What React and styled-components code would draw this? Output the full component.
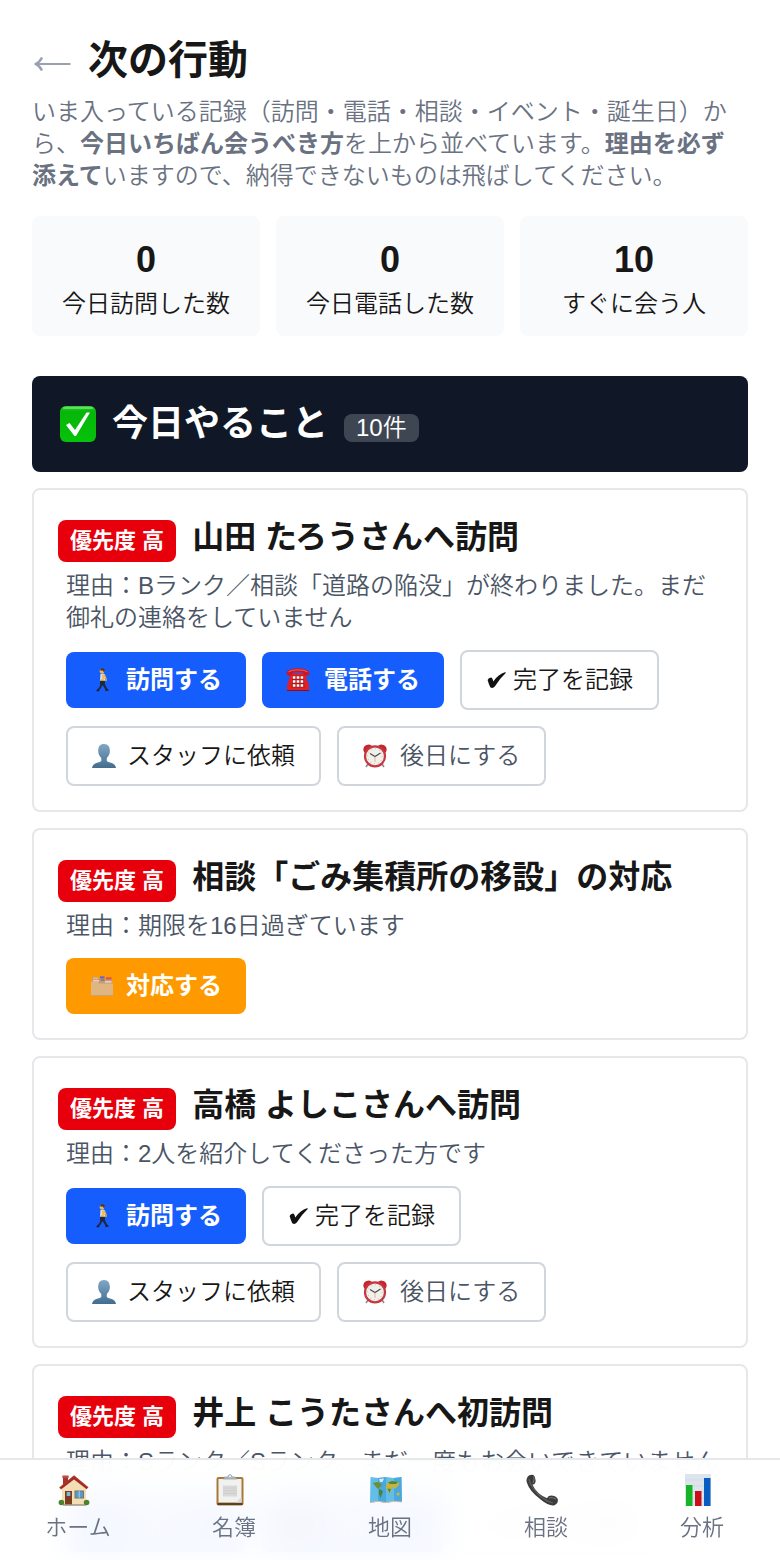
import React from "react";
import styled, { createGlobalStyle, css } from "styled-components";

const GlobalStyle = createGlobalStyle`
  *, *::before, *::after { box-sizing: border-box; }
  body {
    margin: 0;
    background: #ffffff;
    color: #171717;
    font-family: "Liberation Sans", "Noto Sans CJK JP", sans-serif;
    font-size: 24px;
    font-weight: 350;
    line-height: 32px;
  }
  h1, h2, h3, p, ul { margin: 0; padding: 0; }
  ul { list-style: none; }
`;

const Shell = styled.div`
  height: 100vh;
  overflow: hidden;
`;

const Page = styled.main`
  height: 100%;
  overflow-y: auto;
  scrollbar-width: none;
  padding: 32px 32px 120px;
`;

const Header = styled.header`
  display: flex;
  align-items: center;
  gap: 16px;
  margin-bottom: 8px;
`;

const BackLink = styled.a`
  display: flex;
  width: 40px;
  padding-top: 8px;
  color: #99a1af;
`;

const Title = styled.h1`
  font-size: 40px;
  font-weight: 600;
  line-height: 56px;
`;

const Lead = styled.p`
  color: #6a7282;
  strong { font-weight: 700; }
`;

const Stats = styled.section`
  display: grid;
  grid-template-columns: repeat(3, 1fr);
  gap: 16px;
  margin: 24px 0 40px;
`;

const StatCard = styled.div`
  padding: 16px;
  border-radius: 8px;
  background: #f9fafb;
  text-align: center;
`;

const StatValue = styled.div`
  font-size: 36px;
  font-weight: 700;
  line-height: 56px;
`;

const Banner = styled.div`
  display: flex;
  align-items: center;
  gap: 16px;
  padding: 24px 28px;
  border-radius: 8px;
  background: #101828;
  color: #ffffff;
`;

const BannerHeading = styled.div`
  display: flex;
  align-items: baseline;
  gap: 16px;
`;

const BannerTitle = styled.h2`
  font-size: 36px;
  font-weight: 600;
  line-height: 48px;
`;

const Count = styled.span`
  padding: 0 12px;
  border-radius: 8px;
  background: rgba(255, 255, 255, 0.2);
  line-height: 28px;
`;

const TaskList = styled.ul`
  display: flex;
  flex-direction: column;
  gap: 16px;
  margin-top: 16px;
`;

const Card = styled.li`
  padding: 24px;
  border: 2px solid #e5e7eb;
  border-radius: 8px;
`;

const CardHead = styled.div`
  display: flex;
  align-items: flex-start;
  gap: 16px;
  margin-bottom: 8px;
`;

const Priority = styled.span`
  flex: none;
  margin-top: 6px;
  padding: 0 12px;
  border-radius: 8px;
  background: #e7000b;
  color: #ffffff;
  font-size: 22px;
  font-weight: 600;
  line-height: 42px;
`;

const CardTitle = styled.h3`
  font-size: 32px;
  font-weight: 600;
  line-height: 46px;
`;

const Reason = styled.p`
  margin-right: -2px;
  padding-left: 8px;
  color: #4a5565;
`;

const Actions = styled.div`
  display: flex;
  flex-wrap: wrap;
  align-items: center;
  gap: 16px;
  margin-top: 16px;
  padding-left: 8px;
`;

const tones = {
  blue: css`background: #155dfc; color: #ffffff; font-weight: 600;`,
  amber: css`background: #fe9a00; color: #ffffff; font-weight: 600;`,
  plain: css`border: 2px solid #d1d5dc; background: #ffffff; color: #171717;`,
  muted: css`border: 2px solid #d1d5dc; background: #ffffff; color: #4a5565;`,
};

const ActionButton = styled.button`
  display: inline-flex;
  align-items: center;
  padding: 12px 24px;
  border: 0;
  border-radius: 8px;
  font: inherit;
  line-height: 32px;
  cursor: pointer;
  ${({ $tone }) => tones[$tone]}
`;

const IconSlot = styled.span`
  display: flex;
  width: ${({ $width }) => $width}px;
`;

const TabBar = styled.nav`
  position: fixed;
  right: 0;
  bottom: 0;
  left: 0;
  display: grid;
  grid-template-columns: repeat(5, 1fr);
  padding: 14px 0 16px;
  border-top: 2px solid #e5e7eb;
  background: rgba(255, 255, 255, 0.95);
  backdrop-filter: blur(16px);
`;

const Tab = styled.a`
  display: flex;
  flex-direction: column;
  align-items: center;
  gap: 6px;
  color: #6a7282;
  font-size: 22px;
  text-decoration: none;
  svg { margin-right: 8px; }
`;

const Svg = ({ size = 24, box = 24, children }) => (
  <svg width={size} height={size} viewBox={`0 0 ${box} ${box}`} aria-hidden="true" fill="none">
    {children}
  </svg>
);

const BackArrow = () => (
  <svg width="40" height="20" viewBox="0 0 40 20" fill="none" aria-hidden="true">
    <path d="M4 10H38.5" stroke="currentColor" strokeWidth="2" />
    <path d="M10 3.5Q8 8 3.5 10Q8 12 10 16.5" stroke="currentColor" strokeWidth="2.4" strokeLinejoin="round" />
  </svg>
);

const CheckBoxIcon = () => (
  <Svg size={36} box={36}>
    <defs>
      <linearGradient id="green" x1="0" y1="0" x2="0" y2="1">
        <stop offset="0" stopColor="#35d035" />
        <stop offset="0.15" stopColor="#06b60a" />
        <stop offset="1" stopColor="#06c20a" />
      </linearGradient>
    </defs>
    <rect width="36" height="36" rx="6" fill="url(#green)" />
    <rect x="3" y="1" width="30" height="2" rx="1" fill="#7ce47c" opacity="0.7" />
    <path d="M6 19L9.5 17L15 24L26.5 6.5H30L16 30H14.5Z" fill="#fff" />
  </Svg>
);

const WalkIcon = () => (
  <Svg>
    <circle cx="12" cy="3.2" r="2.4" fill="#e8b45a" />
    <path d="M10.2 2.6Q10 0.2 12.6 0.2Q15 0.6 14.8 3.4L13.6 4L13 2.4Z" fill="#4a3320" />
    <path d="M10.4 6Q13 4.8 15 6.4L15.4 13.4H10Z" fill="#dbe0e2" />
    <path d="M12.6 6.6L13.6 10.4L11.4 12.8" stroke="#f0bd52" strokeWidth="2" />
    <path d="M14.4 7L16 10.5L16 13" stroke="#e8a94f" strokeWidth="1.4" />
    <path d="M10 12.8H15.2L14.8 16L17.4 21L15.8 22L12.4 17L11 20L9 22.2L7.8 21.2L10 18Z" fill="#20283c" />
    <path d="M6.5 22.2L8 20.7L9.7 22L8.8 23.2H6.7ZM15 21.7L17.2 20.8L18.6 21.8V22.8H15Z" fill="#221f26" />
  </Svg>
);

const PhoneIcon = () => (
  <Svg>
    <path d="M5 5H19L23 17V22.5H1V17Z" fill="#dc2128" />
    <path d="M0.5 6.5Q0 2 6 1Q12 -0.5 18 1Q24 2 23.5 6.5Q21 8.5 18 7L17 4.5Q12 3 7 4.5L6 7Q3 8.5 0.5 6.5Z" fill="#cf1620" />
    <path d="M2.5 3.8Q5 2 12 1.8Q19 2 21.5 3.8" stroke="#f25a5f" />
    <path d="M6.5 7.5H17.5L18.5 19.5H5.5Z" fill="#b3141c" />
    <path d="M6.8 9.5H17.2M6.8 13.5H17.2M6.8 17.5H17.2" stroke="#fff" strokeWidth="2.6" strokeDasharray="2.6 1.3" />
    <path d="M1 22.5H23" stroke="#8e0d14" />
  </Svg>
);

const HeavyCheckIcon = () => (
  <Svg>
    <path d="M1.6 12Q2.6 9.7 5 9.5Q6.5 9.5 7.2 13.4Q12.5 6 19 4.2Q20.5 4 19.5 5.3Q13.5 10.8 8.8 18.6Q6.6 21 4.3 19.3Q3 17 1.6 12Z" fill="#111" />
  </Svg>
);

const PersonIcon = () => (
  <Svg>
    <defs>
      <linearGradient id="bust" x1="0" y1="0" x2="0" y2="1">
        <stop offset="0" stopColor="#80a7c5" />
        <stop offset="1" stopColor="#426d90" />
      </linearGradient>
    </defs>
    <path d="M12 0C7.8 0 6 3 6.2 7.5C6.3 10.5 7.8 12.5 9.3 14V17Q8.5 18 5 18.7Q0.5 20 0 24H24Q23.5 20 19 18.7Q15.5 18 14.8 17V14C16.3 12.5 17.8 10.5 17.9 7.5C18 3 16.2 0 12 0Z" fill="url(#bust)" />
  </Svg>
);

const ClockIcon = () => (
  <Svg>
    <path d="M5 20L3 23M19 20L21 23" stroke="#8a8d91" strokeWidth="1.6" />
    <path d="M1 8Q-1 3 3.5 1Q7 -0.5 9 2L2 9Z" fill="#c72631" />
    <path d="M23 8Q25 3 20.5 1Q17 -0.5 15 2L22 9Z" fill="#c72631" />
    <circle cx="12" cy="12.3" r="10" fill="#f2f0ea" stroke="#c4383f" strokeWidth="2.2" />
    <circle cx="12" cy="12.3" r="7.4" stroke="#aaa" strokeWidth="1" strokeDasharray="0.8 3.07" />
    <path d="M7 9.5L12 12.5L17.5 9" stroke="#4a4a4a" strokeWidth="1.1" />
    <path d="M12 12.5V18" stroke="#d6a36b" strokeWidth="0.7" />
  </Svg>
);

const DividersIcon = () => (
  <Svg>
    <path d="M2 3H8L9 5H15L16 4H22V10H2Z" fill="#c89b75" />
    <path d="M3 4.4H8" stroke="#e5b5a0" strokeWidth="1.6" />
    <path d="M10 3.4H14.5" stroke="#4c68d5" strokeWidth="2" />
    <path d="M16 4.4H21.5" stroke="#ed4553" strokeWidth="2" />
    <path d="M3 6.8H9M15 7.8H21.5" stroke="#f2dfcc" strokeWidth="1.3" />
    <path d="M10.5 6H14.5" stroke="#5266c4" strokeWidth="1.2" />
    <path d="M1 8H8L9 9.5H23V22H1Z" fill="#dfb582" />
    <path d="M1 21.5H23" stroke="#cda06d" />
  </Svg>
);

const HomeIcon = () => (
  <Svg size={32} box={32}>
    <path d="M5 2H10V11H5Z" fill="#a4332b" />
    <path d="M4.4 1.5H10.6V4H4.4Z" fill="#bd4b3e" />
    <path d="M4 14L16 4L28 14V31H4Z" fill="#f3dfb5" />
    <path d="M16 1.2L30.5 13.3L28.6 15.3L16 5.4L3 15.6L1.2 13.5Z" fill="#b2342c" />
    <path d="M3 14L16 3.8L28.8 14" stroke="#7d211d" strokeWidth="0.7" />
    <rect x="7" y="17" width="7" height="14" fill="#7c3c22" />
    <rect x="8.7" y="18" width="3.6" height="4" fill="#7db8d8" />
    <rect x="17" y="17" width="8.5" height="7" fill="#4f9fd6" stroke="#836e57" />
    <path d="M21.2 17V24" stroke="#c1dded" strokeWidth="0.8" />
    <path d="M5 31H28" stroke="#a39b88" strokeWidth="1.6" />
    <circle cx="3.4" cy="28.5" r="2.8" fill="#4c822b" />
    <circle cx="28.6" cy="28.5" r="2.8" fill="#4c822b" />
  </Svg>
);

const ClipboardIcon = () => (
  <Svg size={32} box={32}>
    <rect x="2.5" y="3" width="27" height="28.5" rx="2" fill="#a97839" />
    <path d="M3.5 30H28.5" stroke="#594125" strokeWidth="2" />
    <rect x="4.5" y="5" width="23" height="23.5" fill="#f1f1f0" />
    <rect x="9" y="11.5" width="14" height="11" fill="#d9d9d9" />
    <path d="M9 14H23M9 16.7H23M9 19.4H23" stroke="#cbcbcb" strokeWidth="0.8" />
    <path d="M22 28.5L27.5 23V28.5Z" fill="#d9d9d7" />
    <path d="M9 5L10.5 3H13.5Q16 -2 18.5 3H21.5L23 5Z" fill="#b7bdc1" stroke="#82898e" strokeWidth="0.6" />
    <circle cx="16" cy="2.2" r="0.9" fill="#fff" />
  </Svg>
);

const MapIcon = () => (
  <Svg size={32} box={32}>
    <path d="M0.5 3L8 4L16 3L24 4L31.5 3L32 28L24 27.5L16 29L8 27.5L0 29Z" fill="#62bde8" />
    <path d="M8 4L16 3V29L8 27.5ZM24 4L31.5 3L32 28L24 27.5Z" fill="#2f95d0" opacity="0.5" />
    <path d="M0 28.6L8 27.2L16 28.6L24 27.2L32 28" stroke="#d8bda0" strokeWidth="1" />
    <path d="M3 9L7 8L10 9L12 11L10 13L8 15L6 13Z" fill="#6f8f34" />
    <path d="M9 15L13 17L12 20L10.5 24L9 20Z" fill="#4f8033" />
    <path d="M9 5L14 4.6L12.5 8L10 8Z" fill="#d6ecf4" />
    <path d="M17 10L20 7L28 8L29.5 10L27 13L25 15L23 13L21.5 14L21 18L19.5 20L18 16L15.5 14L16 12Z" fill="#c9b23b" />
    <path d="M18 8.5L22 7L28 8L26 10L20 10ZM17.5 14.5L21 15L19.5 19Z" fill="#4a8a33" />
    <path d="M26.5 19L29.5 18.6L29.5 21.5L27 21.5Z" fill="#d2b04a" />
  </Svg>
);

const HandsetIcon = () => (
  <Svg size={32} box={32}>
    <path d="M1 4Q3 0 7.5 1Q10 3 9.5 8Q9 10.5 6.5 10.8Q8 15 13 19.5Q17 22.8 21 24.3Q22 21.7 25 21.5Q29.5 21.5 31.5 24.5Q33 29 28.5 31.3Q23 32.5 14 25Q3.5 17 1 9Q0 6.5 1 4Z" fill="#3c3c3c" />
    <path d="M3 5Q4 12 12 20Q20 27.5 27 29" stroke="#606060" strokeWidth="1.2" />
    <path d="M7.8 2.5Q8.8 6 7 9M23 24Q26 22.7 30 25" stroke="#808080" strokeWidth="0.9" />
  </Svg>
);

const ChartIcon = () => (
  <Svg size={32} box={32}>
    <rect x="3" y="0" width="26" height="32" fill="#dce4ed" />
    <path d="M3 6H29M3 12H29M3 18H29M3 24H29" stroke="#ccd6e0" strokeWidth="0.6" />
    <rect x="4" y="11" width="6.5" height="21" fill="#15b526" />
    <rect x="13" y="17" width="6.5" height="15" fill="#c8101b" />
    <rect x="22" y="4" width="6.5" height="28" fill="#075ec0" />
  </Svg>
);

const ACTIONS = {
  visit: { label: "訪問する", tone: "blue", Icon: WalkIcon, slot: 36 },
  call: { label: "電話する", tone: "blue", Icon: PhoneIcon, slot: 38 },
  done: { label: "完了を記録", tone: "plain", Icon: HeavyCheckIcon, slot: 27 },
  staff: { label: "スタッフに依頼", tone: "plain", Icon: PersonIcon, slot: 35 },
  later: { label: "後日にする", tone: "muted", Icon: ClockIcon, slot: 37 },
  handle: { label: "対応する", tone: "amber", Icon: DividersIcon, slot: 36 },
};

const STATS = [
  { value: 0, label: "今日訪問した数" },
  { value: 0, label: "今日電話した数" },
  { value: 10, label: "すぐに会う人" },
];

const TASKS = [
  {
    title: "山田 たろうさんへ訪問",
    reason: "Bランク／相談「道路の陥没」が終わりました。まだ御礼の連絡をしていません",
    actions: ["visit", "call", "done", "staff", "later"],
  },
  {
    title: "相談「ごみ集積所の移設」の対応",
    reason: "期限を16日過ぎています",
    actions: ["handle"],
  },
  {
    title: "高橋 よしこさんへ訪問",
    reason: "2人を紹介してくださった方です",
    actions: ["visit", "done", "staff", "later"],
  },
  {
    title: "井上 こうたさんへ初訪問",
    reason: "Sランク／Sランク。まだ一度もお会いできていません",
    actions: ["visit", "call", "done"],
  },
];

const TABS = [
  { label: "ホーム", Icon: HomeIcon },
  { label: "名簿", Icon: ClipboardIcon },
  { label: "地図", Icon: MapIcon },
  { label: "相談", Icon: HandsetIcon },
  { label: "分析", Icon: ChartIcon },
];

export default function App() {
  return (
    <Shell lang="ja">
      <GlobalStyle />
      <Page>
        <Header>
          <BackLink href="#" aria-label="戻る"><BackArrow /></BackLink>
          <Title>次の行動</Title>
        </Header>
        <Lead>
          いま入っている記録（訪問・電話・相談・イベント・誕生日）から、<strong>今日いちばん会うべき方</strong>を上から並べています。<strong>理由を必ず添えて</strong>いますので、納得できないものは飛ばしてください。
        </Lead>
        <Stats>
          {STATS.map((s) => (
            <StatCard key={s.label}>
              <StatValue>{s.value}</StatValue>
              <div>{s.label}</div>
            </StatCard>
          ))}
        </Stats>
        <Banner>
          <CheckBoxIcon />
          <BannerHeading>
            <BannerTitle>今日やること</BannerTitle>
            <Count>10件</Count>
          </BannerHeading>
        </Banner>
        <TaskList>
          {TASKS.map((task) => (
            <Card key={task.title}>
              <CardHead>
                <Priority>優先度 高</Priority>
                <CardTitle>{task.title}</CardTitle>
              </CardHead>
              <Reason>理由：{task.reason}</Reason>
              <Actions>
                {task.actions.map((key) => {
                  const { label, tone, Icon, slot } = ACTIONS[key];
                  return (
                    <ActionButton key={key} type="button" $tone={tone}>
                      <IconSlot $width={slot}><Icon /></IconSlot>
                      {label}
                    </ActionButton>
                  );
                })}
              </Actions>
            </Card>
          ))}
        </TaskList>
      </Page>
      <TabBar>
        {TABS.map(({ label, Icon }) => (
          <Tab key={label} href="#"><Icon />{label}</Tab>
        ))}
      </TabBar>
    </Shell>
  );
}
